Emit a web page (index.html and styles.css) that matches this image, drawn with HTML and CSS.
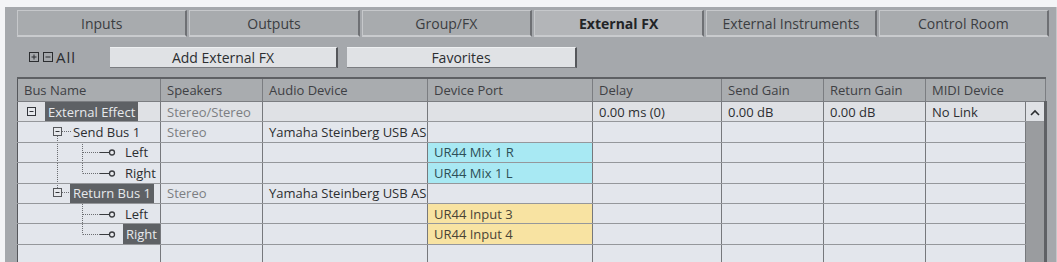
FILE: index.html
```html
<!DOCTYPE html>
<html lang="en">
<head>
  <meta charset="UTF-8" />
  <title>VST Connections - External FX</title>
  <link rel="stylesheet" href="styles.css">
</head>
<body>
  <div class="panel">
    <div class="tabs">
      <div class="tab">Inputs</div>
      <div class="tab">Outputs</div>
      <div class="tab">Group/FX</div>
      <div class="tab active">External FX</div>
      <div class="tab">External Instruments</div>
      <div class="tab">Control Room</div>
    </div>

    <div class="toolbar">
      <div class="expand">
        <svg width="10" height="10" viewBox="0 0 10 10"><rect x="0.5" y="0.5" width="9" height="9" fill="none" stroke="#2b2d30"/><path d="M2.5 5h5M5 2.5v5" stroke="#2b2d30"/></svg>
        <svg width="10" height="10" viewBox="0 0 10 10"><rect x="0.5" y="0.5" width="9" height="9" fill="none" stroke="#2b2d30"/><path d="M2.5 5h5" stroke="#2b2d30"/></svg>
        <span>All</span>
      </div>
      <button class="btn add">Add External FX</button>
      <button class="btn fav">Favorites</button>
    </div>

    <table class="buses">
      <colgroup>
        <col style="width:143px"><col style="width:102px"><col style="width:165px"><col style="width:165px">
        <col style="width:129px"><col style="width:102px"><col style="width:102px"><col style="width:100px"><col style="width:20px">
      </colgroup>
      <thead>
        <tr>
          <th>Bus Name</th>
          <th>Speakers</th>
          <th>Audio Device</th>
          <th>Device Port</th>
          <th>Delay</th>
          <th>Send Gain</th>
          <th>Return Gain</th>
          <th colspan="2">MIDI Device</th>
        </tr>
      </thead>
      <tbody>
        <tr class="top">
          <td class="name">
            <div class="node">
              <svg class="tree" width="27" height="20"><rect x="9.5" y="5.5" width="8" height="8" fill="#e6e8ec" stroke="#33353a"/><path d="M11.5 9.5h4" stroke="#33353a"/></svg>
              <span class="tag">External Effect</span>
            </div>
          </td>
          <td class="dim">Stereo/Stereo</td>
          <td></td>
          <td></td>
          <td>0.00 ms (0)</td>
          <td>0.00 dB</td>
          <td>0.00 dB</td>
          <td>No Link</td>
          <td class="arrow"><svg width="12" height="8" viewBox="0 0 12 8"><path d="M2 6l4-4 4 4" fill="none" stroke="#2b2d30" stroke-width="1.6"/></svg></td>
        </tr>
        <tr>
          <td class="name">
            <div class="node">
              <svg class="tree" width="55" height="20"><path d="M39.5 14v6" stroke="#6b6d71" stroke-dasharray="1 1"/><path d="M44 9.5h10" stroke="#6b6d71" stroke-dasharray="1 1"/><rect x="35.5" y="5.5" width="8" height="8" fill="#e6e8ec" stroke="#55575b"/><path d="M37.5 9.5h4" stroke="#33353a"/></svg>
              <span>Send Bus 1</span>
            </div>
          </td>
          <td class="dim">Stereo</td>
          <td>Yamaha Steinberg USB AS</td>
          <td></td>
          <td></td><td></td><td></td><td></td>
          <td class="track" rowspan="7"></td>
        </tr>
        <tr>
          <td class="name">
            <div class="node">
              <svg class="tree" width="107" height="20"><path d="M39.5 0v20M64.5 0v20M65 10.5h17" stroke="#6b6d71" stroke-dasharray="1 1"/><path d="M82 10.5h9" stroke="#3a3c40"/><circle cx="94" cy="10.5" r="2.5" fill="#e6e8ec" stroke="#3a3c40" stroke-width="1.3"/></svg>
              <span>Left</span>
            </div>
          </td>
          <td></td><td></td>
          <td class="cyan">UR44 Mix 1 R</td>
          <td></td><td></td><td></td><td></td>
        </tr>
        <tr>
          <td class="name">
            <div class="node">
              <svg class="tree" width="107" height="20"><path d="M39.5 0v20M64.5 0v10.5M65 10.5h17" stroke="#6b6d71" stroke-dasharray="1 1"/><path d="M82 10.5h9" stroke="#3a3c40"/><circle cx="94" cy="10.5" r="2.5" fill="#e6e8ec" stroke="#3a3c40" stroke-width="1.3"/></svg>
              <span>Right</span>
            </div>
          </td>
          <td></td><td></td>
          <td class="cyan">UR44 Mix 1 L</td>
          <td></td><td></td><td></td><td></td>
        </tr>
        <tr>
          <td class="name">
            <div class="node">
              <svg class="tree" width="52" height="20"><path d="M39.5 0v5M44 9.5h8" stroke="#6b6d71" stroke-dasharray="1 1"/><rect x="35.5" y="5.5" width="8" height="8" fill="#e6e8ec" stroke="#55575b"/><path d="M37.5 9.5h4" stroke="#33353a"/></svg>
              <span class="tag">Return Bus 1</span>
            </div>
          </td>
          <td class="dim">Stereo</td>
          <td>Yamaha Steinberg USB AS</td>
          <td></td>
          <td></td><td></td><td></td><td></td>
        </tr>
        <tr>
          <td class="name">
            <div class="node">
              <svg class="tree" width="107" height="20"><path d="M64.5 0v20M65 10.5h17" stroke="#6b6d71" stroke-dasharray="1 1"/><path d="M82 10.5h9" stroke="#3a3c40"/><circle cx="94" cy="10.5" r="2.5" fill="#e6e8ec" stroke="#3a3c40" stroke-width="1.3"/></svg>
              <span>Left</span>
            </div>
          </td>
          <td></td><td></td>
          <td class="yellow">UR44 Input 3</td>
          <td></td><td></td><td></td><td></td>
        </tr>
        <tr>
          <td class="name">
            <div class="node">
              <svg class="tree" width="105" height="20"><path d="M64.5 0v10.5M65 10.5h17" stroke="#6b6d71" stroke-dasharray="1 1"/><path d="M82 10.5h9" stroke="#3a3c40"/><circle cx="94" cy="10.5" r="2.5" fill="#e6e8ec" stroke="#3a3c40" stroke-width="1.3"/></svg>
              <span class="tag">Right</span>
            </div>
          </td>
          <td></td><td></td>
          <td class="yellow">UR44 Input 4</td>
          <td></td><td></td><td></td><td></td>
        </tr>
        <tr>
          <td class="name"></td>
          <td></td><td></td><td></td><td></td><td></td><td></td><td></td>
        </tr>
      </tbody>
    </table>
  </div>
</body>
</html>
```

FILE: styles.css
```css
body {
  margin: 0;
  background-color: #f3f4f6;
  font-family: "Open Sans", "Noto Sans", sans-serif;
  font-size: 13px;
  color: #2c2e31;
  overflow: hidden;
}

.panel {
  margin: 7px 0 0 5px;
  height: 255px;
  padding: 3px 7px 0 12px;
  background: #a5a8ac;
  box-sizing: border-box;
  border-right: 1px solid #c4c6c9;
}

.tabs {
  display: flex;
  gap: 2px;
  height: 27px;
}

.tab {
  flex: 1;
  display: flex;
  align-items: center;
  justify-content: center;
  background: #a8abae;
  border-top: 1px solid #c6c8cb;
  border-left: 1px solid #c6c8cb;
  border-right: 2px solid #6e7074;
  border-bottom: 2px solid #c9cbce;
  font-size: 14px;
  color: #3b3d41;
}

.tab.active {
  background: #b3b5b8;
  font-weight: bold;
  color: #222427;
}

.toolbar {
  display: flex;
  align-items: center;
  height: 40px;
}

.expand {
  display: flex;
  align-items: center;
  gap: 4px;
  margin-left: 12px;
  width: 81px;
  color: #2b2d30;
  font-size: 15px;
  letter-spacing: 1px;
}

.expand span {
  margin-left: -1px;
}

.btn {
  height: 21px;
  padding: 0;
  background: #e0e2e5;
  border: none;
  border-right: 2px solid #55575b;
  border-bottom: 1px solid #7a7c80;
  border-top: 1px solid #eef0f2;
  font-family: inherit;
  font-size: 14px;
  color: #2c2e31;
}

.btn.add {
  width: 228px;
}

.btn.fav {
  width: 230px;
  margin-left: 9px;
}

.buses {
  border-collapse: collapse;
  table-layout: fixed;
  width: 1028px;
  border: 1px solid #55575b;
}

.buses th {
  height: 22px;
  padding: 0 6px;
  background: #a9acaf;
  border-right: 1px solid #7b7d81;
  border-top: 2px solid #5e6064;
  border-bottom: 1px solid #7b7d81;
  text-align: left;
  font-weight: normal;
  color: #3e4044;
  white-space: nowrap;
}

.buses td {
  height: 20.4px;
  padding: 0 6px;
  background: #e3e6ec;
  border-right: 1px solid #76787c;
  border-bottom: 1px solid #95979b;
  white-space: nowrap;
  overflow: hidden;
  box-sizing: border-box;
}

.buses tr.top td {
  background: #dfe1e5;
}

.buses td.name {
  padding: 0;
}

.node {
  display: flex;
  align-items: center;
  height: 19.4px;
}

.tree {
  flex: none;
}

.tag {
  display: flex;
  align-items: center;
  height: 100%;
  padding: 0 3px;
  background: #5e6165;
  color: #e7e9ec;
}

.buses td.dim {
  color: #7c7e82;
}

.buses td.cyan {
  background: #a8e9f3;
  color: #2d4f57;
}

.buses td.yellow {
  background: #f8e3a2;
  color: #4a4436;
}

.buses td.arrow {
  padding: 0;
  text-align: center;
  background: #d9dbdf;
  border-right: 3px solid #5f6165;
}

.buses td.track {
  padding: 0;
  background: #9a9c9f;
  border-right: 3px solid #5f6165;
}
```
